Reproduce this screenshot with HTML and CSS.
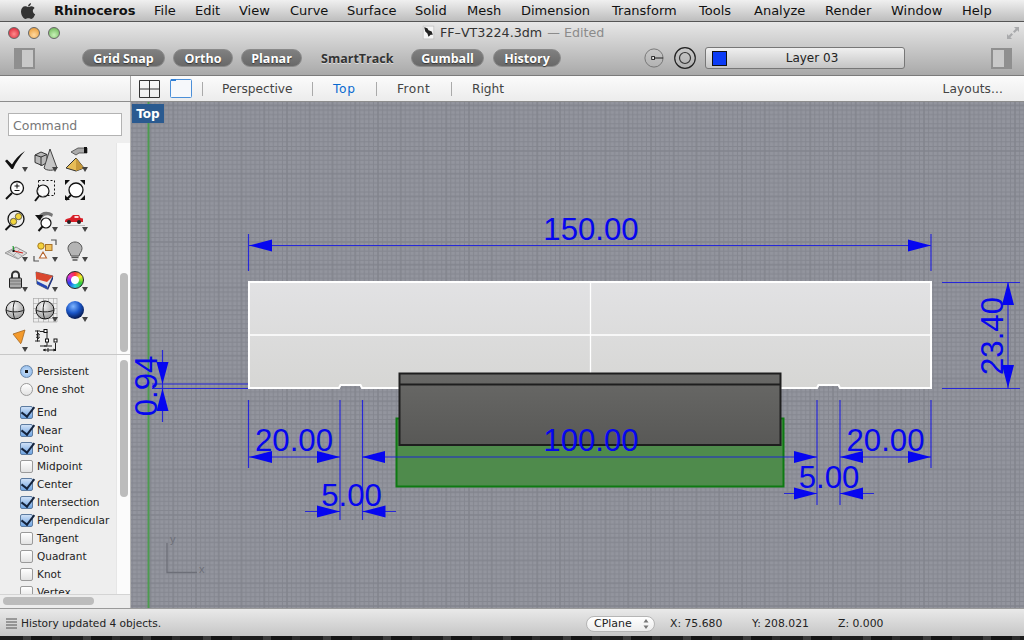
FILE: index.html
```html
<!DOCTYPE html>
<html lang="en">
<head>
<meta charset="utf-8">
<title>FF-VT3224.3dm</title>
<link rel="stylesheet" href="styles.css">
</head>
<body>
<header class="menubar">
  <svg class="apple" viewBox="0 0 16 18"><path d="M11 1c0 2-1.500 3.500-3 3.500C8 3 9.500 1.300 11 1zM8 5c1 0 2-.8 3.400-.8 1.300 0 2.500.7 3.200 1.800-2.600 1.500-2.200 5 .6 6.200-.8 2-2.300 4.800-4 4.800-1 0-1.500-.7-2.800-.7s-1.900.7-2.900.7C3.500 17 1 13 1 9.500 1 6.300 3 4.300 5.100 4.300 6.300 4.300 7.200 5 8 5z"/></svg>
  <span class="menu-app">Rhinoceros</span>
  <span>File</span><span>Edit</span><span>View</span><span>Curve</span><span>Surface</span><span>Solid</span><span>Mesh</span><span>Dimension</span><span>Transform</span><span>Tools</span><span>Analyze</span><span>Render</span><span>Window</span><span>Help</span>
</header>

<div class="window">
  <div class="chrome">
    <div class="titlerow">
      <div class="lights"><i class="light red"></i><i class="light amber"></i><i class="light green"></i></div>
      <div class="title">
        <svg class="doc" viewBox="0 0 12 14"><rect x="1" y="1" width="10" height="12" fill="#f4f4f4" stroke="#bbb" stroke-width=".6"/><path d="M2 2l3 1 1 2 3 1 1 3-2 0-2 2-1-3-2-2z" fill="#222"/></svg>
        <span>FF–VT3224.3dm</span><span class="edited">— Edited</span>
      </div>
      <svg class="fullscreen" viewBox="0 0 14 14"><path d="M13 1H8l1.700 1.700L7 5.400l1.600 1.600 2.700-2.700L13 6zM1 13h5l-1.700-1.700L7 8.600 5.400 7 2.700 9.700 1 8z" fill="#a9aaac"/></svg>
    </div>
    <div class="toolrow">
      <svg class="panel-toggle" viewBox="0 0 21 21"><rect x="1" y="1" width="19" height="19" fill="#c9c9c9" stroke="#8f8f8f" stroke-width="2"/><rect x="1" y="1" width="7" height="19" fill="#8f8f8f"/></svg>
      <div class="pills">
        <span class="pill p1">Grid Snap</span>
        <span class="pill p2">Ortho</span>
        <span class="pill p3">Planar</span>
        <span class="pill-off">SmartTrack</span>
        <span class="pill p4">Gumball</span>
        <span class="pill p5">History</span>
      </div>
      <svg class="tool-a" viewBox="0 0 22 22"><circle cx="11" cy="11" r="10" fill="none" stroke="#6a6a6a" stroke-width=".9"/><rect x="8.500" y="9.500" width="3" height="3" fill="#fff" stroke="#111"/><path d="M11.500 11H21" stroke="#111"/></svg>
      <svg class="tool-b" viewBox="0 0 22 22"><circle cx="11" cy="11" r="10.300" fill="none" stroke="#222" stroke-width="1.200"/><circle cx="11" cy="11" r="5.500" fill="none" stroke="#333" stroke-width="1.200"/></svg>
      <div class="layer"><i class="swatch"></i><span>Layer 03</span></div>
      <svg class="panel-toggle right" viewBox="0 0 21 21"><rect x="1" y="1" width="19" height="19" fill="#c9c9c9" stroke="#8f8f8f" stroke-width="2"/><rect x="13" y="1" width="7" height="19" fill="#8f8f8f"/></svg>
    </div>
  </div>

  <nav class="tabs">
    <div class="tabs-left"></div>
    <svg class="vp-four" viewBox="0 0 21 18"><path d="M.5 .5h20v17H.500zM.5 9h20M10.500 .5v17" fill="none" stroke="#333"/></svg>
    <svg class="vp-one" viewBox="0 0 22 19"><rect x=".5" y=".5" width="21" height="18" rx="1" fill="#f6f8fb" stroke="#4b8fd8"/><path d="M1 1h5" stroke="#2f7fd6" stroke-width="2"/></svg>
    <i class="sep s1"></i>
    <span class="tab t1">Perspective</span><i class="sep s2"></i>
    <span class="tab t2 active">Top</span><i class="sep s3"></i>
    <span class="tab t3">Front</span><i class="sep s4"></i>
    <span class="tab t4">Right</span>
    <span class="tab layouts">Layouts...</span>
  </nav>

  <main class="main">
    <aside class="sidebar">
      <div class="cmd-wrap"><div class="command">Command</div></div>
      <div class="tools-pane">
        <div class="palette">
          <div class="ic dd"><svg viewBox="0 0 30 30"><path d="M5 15l2-1.500 5 5C15 13 19 9 25 5c-5 6-9 11-12 18h-1.500z" fill="#111"/></svg></div>
          <div class="ic dd"><svg viewBox="0 0 30 30"><path d="M5 9l6-3 6 2.500v8l-5 3-7-3z" fill="#b9b9b9" stroke="#333"/><path d="M11 11l6-2.500M11 11l-6-2M11 11v9" stroke="#333" fill="none"/><path d="M20 3l7 19c-2 3-11 3-13 0z" fill="#c6c6c6" stroke="#444"/></svg></div>
          <div class="ic dd"><svg viewBox="0 0 30 30"><path d="M11 6l7-4h9v5H19l-3 2z" fill="#aaa" stroke="#444" stroke-width=".8"/><rect x="24" y="1" width="3" height="6" fill="#111"/><path d="M16 12L6 22l10 3 8-3z" fill="#e7bd57" stroke="#333"/><path d="M16 12v13l8-3z" fill="#c79a3c"/></svg></div>

          <div class="ic"><svg viewBox="0 0 30 30"><circle cx="17" cy="12" r="6.500" fill="#fff" stroke="#111" stroke-width="1.300"/><path d="M12 17l-6 6" stroke="#111" stroke-width="2"/><path d="M14.500 10h5M17 7.500v5M14.500 14.500h5" stroke="#111"/></svg></div>
          <div class="ic"><svg viewBox="0 0 30 30"><rect x="8.500" y="4.500" width="16" height="15" fill="none" stroke="#111" stroke-dasharray="2 2"/><circle cx="13" cy="15" r="6" fill="#fff" fill-opacity=".7" stroke="#111" stroke-width="1.200"/><path d="M9 20l-4 5" stroke="#111" stroke-width="2"/></svg></div>
          <div class="ic"><svg viewBox="0 0 30 30"><circle cx="16" cy="14" r="7" fill="#fff" stroke="#111" stroke-width="1.300"/><path d="M11 19l-5 5" stroke="#111" stroke-width="2"/><path d="M5 4h5L5 9zM25 4h-5l5 5zM5 24h5l-5-5zM25 24h-5l5-5z" fill="#111"/></svg></div>

          <div class="ic"><svg viewBox="0 0 30 30"><circle cx="16" cy="13" r="8" fill="#eee" stroke="#111" stroke-width="1.300"/><circle cx="18.500" cy="10.500" r="3.200" fill="#f2d53c" stroke="#333" stroke-width=".7"/><circle cx="13.500" cy="15.500" r="3.200" fill="#f2d53c" stroke="#333" stroke-width=".7"/><path d="M10.500 19l-5 5" stroke="#111" stroke-width="2"/></svg></div>
          <div class="ic dd"><svg viewBox="0 0 30 30"><circle cx="16" cy="17" r="5" fill="#fff" stroke="#111" stroke-width="1.200"/><path d="M12.500 20.500l-4 4.500" stroke="#111" stroke-width="2"/><path d="M8 11c2-5 9-7 15-3l-1 3c-4-3-8-2-10 1z" fill="#777"/><path d="M5 9l8 0-3 6z" fill="#111"/></svg></div>
          <div class="ic dd"><svg viewBox="0 0 30 30"><path d="M5 15c0-2 2-2.500 5-3l3-3h6l1.500 3 2.500.500V16H5z" fill="#d71f28"/><circle cx="9" cy="16" r="2" fill="#222"/><circle cx="19" cy="16" r="2" fill="#222"/><path d="M14.500 10h4v2h-4z" fill="#ffd9d9"/><path d="M4 19.500h21" stroke="#bbb"/></svg></div>

          <div class="ic dd"><svg viewBox="0 0 30 30"><path d="M5 17l11-6 11 6-9 6z" fill="#ddd" stroke="#999"/><path d="M8 15.500l10 7M12 13l10 7M16 11l-9 7M20 13l-8 8" stroke="#999" stroke-width=".7"/><path d="M14 15l-1-5" stroke="#1a9a2a" stroke-width="1.200"/><path d="M14 15l9 2" stroke="#d0231f" stroke-width="1.200"/><rect x="12.500" y="14" width="2" height="2" fill="#111"/></svg></div>
          <div class="ic dd"><svg viewBox="0 0 30 30"><path d="M4 20v5h5M26 9V4h-5" fill="none" stroke="#555" stroke-width="1.200"/><circle cx="11" cy="10" r="3.200" fill="#f4d23c" stroke="#a67a1e"/><rect x="15.500" y="8.500" width="6.500" height="6" fill="#f0c25a" stroke="#a8702a"/><path d="M13 16l3.500 6h-7z" fill="#fff" stroke="#b5642f" stroke-width="1.100"/></svg></div>
          <div class="ic dd"><svg viewBox="0 0 30 30"><path d="M15 6c4 0 7 3 7 6.500 0 3-2.500 4.500-3 7.500h-8c-.5-3-3-4.500-3-7.500C8 9 11 6 15 6z" fill="#b4b4b4" stroke="#555"/><path d="M11.500 21.500h7M12.500 24h5" stroke="#555" stroke-width="1.500"/></svg></div>

          <div class="ic dd"><svg viewBox="0 0 30 30"><path d="M12 12V9a3.500 3.500 0 017 0v3" fill="none" stroke="#333" stroke-width="2"/><rect x="9.500" y="12" width="12" height="10" rx="1" fill="#aaa" stroke="#222"/><path d="M10 15h11M10 18h11" stroke="#777"/></svg></div>
          <div class="ic dd"><svg viewBox="0 0 30 30"><path d="M6 6l17 4-6 13-10-5z" fill="#e8e8e8" stroke="#333" stroke-width=".7"/><path d="M6 6l17 4-6 6-11-3z" fill="#d9472f"/><path d="M7 18l10 5v-3l-10-5z" fill="#2346b6"/><path d="M17 23l6-13v3l-5 11z" fill="#1b2f80"/></svg></div>
          <div class="ic dd"><i class="wheel"></i></div>

          <div class="ic"><svg viewBox="0 0 30 30"><defs><radialGradient id="gs" cx=".4" cy=".3" r=".8"><stop offset="0" stop-color="#f8f8f8"/><stop offset="1" stop-color="#8e8e8e"/></radialGradient></defs><circle cx="15" cy="14" r="9" fill="url(#gs)" stroke="#111"/><path d="M6 14c4 2.500 14 2.500 18 0M15 5c-2.500 4-2.500 14 0 18" fill="none" stroke="#222"/></svg></div>
          <div class="ic dd"><svg viewBox="0 0 30 30"><path d="M3.500 2v24M8.500 2v24M13.500 2v24M18.500 2v24M23.500 2v24M27 2v24M3 2.500h24M3 7.500h24M3 12.500h24M3 17.500h24M3 22.500h24M3 26h24" stroke="#aaa" stroke-width=".7"/><circle cx="15" cy="14" r="9" fill="url(#gs)" stroke="#111"/><path d="M6 14c4 2.500 14 2.500 18 0M15 5c-2.500 4-2.500 14 0 18" fill="none" stroke="#222"/></svg></div>
          <div class="ic dd"><svg viewBox="0 0 30 30"><defs><radialGradient id="bs" cx=".4" cy=".3" r=".75"><stop offset="0" stop-color="#7fb6ff"/><stop offset=".5" stop-color="#1a56c8"/><stop offset="1" stop-color="#04103c"/></radialGradient></defs><circle cx="15" cy="14" r="9" fill="url(#bs)"/></svg></div>

          <div class="ic dd"><svg viewBox="0 0 30 30"><path d="M13 8l12-4-4 14z" fill="#f39a2c" stroke="#9a5a14" stroke-width=".7"/><path d="M8 22c5 4 14 0 15-5" fill="none" stroke="#eee" stroke-width="3"/></svg></div>
          <div class="ic"><svg viewBox="0 0 30 30"><path d="M7.500 4.500v11M5 5h5M5 15h5M8 7l-1.500 2h3zM8 13l-1.500-2h3zM10 5.500h7v14M17 20h-7M22 20H14" fill="none" stroke="#222"/><rect x="14" y="3.500" width="3" height="3" fill="#fff" stroke="#111"/><rect x="15.500" y="13" width="3" height="3" fill="#fff" stroke="#111"/><rect x="24" y="13" width="3" height="3" fill="#fff" stroke="#111"/><path d="M13 24h13M25.500 17v8M18 22v4" stroke="#222"/><path d="M13 24l2.500-1.500v3zM26 24l-2.500-1.500v3z" fill="#111"/></svg></div>
        </div>
        <div class="vtrack top"><b class="thumb"></b></div>
      </div>

      <div class="snap-pane">
        <div class="snap-list">
          <div class="snap radio-row"><i class="radio on"></i>Persistent</div>
          <div class="snap radio-row last"><i class="radio"></i>One shot</div>
          <div class="snap"><i class="box on"></i>End</div>
          <div class="snap"><i class="box on"></i>Near</div>
          <div class="snap"><i class="box on"></i>Point</div>
          <div class="snap"><i class="box"></i>Midpoint</div>
          <div class="snap"><i class="box on"></i>Center</div>
          <div class="snap"><i class="box on"></i>Intersection</div>
          <div class="snap"><i class="box on"></i>Perpendicular</div>
          <div class="snap"><i class="box"></i>Tangent</div>
          <div class="snap"><i class="box"></i>Quadrant</div>
          <div class="snap"><i class="box"></i>Knot</div>
          <div class="snap"><i class="box"></i>Vertex</div>
        </div>
        <div class="vtrack"><b class="thumb"></b></div>
      </div>
      <div class="htrack"><b class="hthumb"></b></div>
    </aside>

    <section class="viewport">
      <span class="vp-label">Top</span>
      <svg class="canvas" viewBox="131 102 893 506">
        <defs>
          <pattern id="grid" patternUnits="userSpaceOnUse" x="148.500" y="103.500" width="22.750" height="22.750">
            <rect width="22.750" height="22.750" fill="#93959e"/>
            <path d="M2 0v22.750M6.550 0v22.750M11.100 0v22.750M15.650 0v22.750M20.200 0v22.750M0 2h22.750M0 6.550h22.750M0 11.100h22.750M0 15.650h22.750M0 20.200h22.750" stroke="#858790" stroke-width="1"/>
            <path d="M2 0v22.750M0 2h22.750" stroke="#81838c" stroke-width="1.100"/>
          </pattern>
          <linearGradient id="plate" x1="0" y1="0" x2="0" y2="1"><stop offset="0" stop-color="#e2e2e4"/><stop offset="1" stop-color="#d6d6d4"/></linearGradient>
          <linearGradient id="dark" x1="0" y1="0" x2="0" y2="1"><stop offset="0" stop-color="#696967"/><stop offset="1" stop-color="#585856"/></linearGradient>
        </defs>
        <rect x="131" y="102" width="893" height="506" fill="url(#grid)"/>
        <path d="M148.500 102v506" stroke="#4d9a50" stroke-width="2"/>

        <path d="M249 282H931V388H840L838.500 385H818.500L817 388H362L360.500 385H340.500L339 388H249Z" fill="url(#plate)" stroke="#fff" stroke-width="2"/>
        <path d="M250 335H930M590.500 283V387" stroke="#fff" stroke-width="1.300"/>

        <rect x="396.500" y="418.500" width="387" height="68" fill="#4f8b4c" stroke="#0e7a12" stroke-width="2"/>
        <rect x="399.500" y="373.500" width="381" height="71.500" fill="url(#dark)" stroke="#1e1e1e" stroke-width="2"/>
        <path d="M400 384.500H780" stroke="#1e1e1e" stroke-width="2"/>

        <g class="dim-lines">
          <path d="M248.500 234v37M931 234v37M249 245.500H931"/>
          <path d="M248.500 400v68M340 400v120M362.500 400v120M817 400v105M840 400v105M931 400v68"/>
          <path d="M249 457H340M362 457H817M840 457H931"/>
          <path d="M305 511.500H340M362 511.500H396M784 493.500H817M840 493.500H874"/>
          <path d="M942 282.500H1020M942 388.500H1020M1008 282V388"/>
          <path d="M162.500 350V422M152 384H248M152 388.500H248"/>
        </g>
        <g class="dim-arrows">
          <path d="M249 245.500L272 239.500V251.500ZM931 245.500L908 239.500V251.500Z"/>
          <path d="M249 457L272 451V463ZM340 457L317 451V463ZM362 457L385 451V463ZM817 457L794 451V463ZM840 457L863 451V463ZM931 457L908 451V463Z"/>
          <path d="M340 511.500L317 505.500V517.500ZM362.500 511.500L385.500 505.500V517.500ZM817 493.500L794 487.500V499.500ZM840 493.500L863 487.500V499.500Z"/>
          <path d="M1008 282L1002 305H1014ZM1008 388L1002 365H1014Z"/>
          <path d="M162.500 384L156.500 362H168.500ZM162.500 388.500L156.500 411H168.500Z"/>
        </g>
        <g class="dim-text">
          <text x="591" y="240" text-anchor="middle">150.00</text>
          <text x="294" y="451" text-anchor="middle">20.00</text>
          <text x="591" y="451" text-anchor="middle">100.00</text>
          <text x="885.500" y="451" text-anchor="middle">20.00</text>
          <text x="351.500" y="506" text-anchor="middle">5.00</text>
          <text x="829" y="488" text-anchor="middle">5.00</text>
          <text transform="translate(1003 336) rotate(-90)" text-anchor="middle">23.40</text>
          <text transform="translate(157 386) rotate(-90)" text-anchor="middle">0.94</text>
        </g>

        <path d="M167 543V572.500H197" fill="none" stroke="#6d6f78" stroke-width="1.300"/>
        <text class="axis" x="170" y="543">y</text>
        <text class="axis" x="199" y="573">x</text>
      </svg>
    </section>
  </main>

  <footer class="status">
    <svg class="lines" viewBox="0 0 11 11"><path d="M0 1h11M0 4h11M0 7h11M0 10h11" stroke="#555"/></svg>
    <span class="status-msg">History updated 4 objects.</span>
    <span class="cplane">CPlane<svg viewBox="0 0 6 10"><path d="M3 0l2.500 3.500h-5zM3 10L.5 6.500h5z" fill="#777"/></svg></span>
    <span class="coord cx">X: 75.680</span>
    <span class="coord cy">Y: 208.021</span>
    <span class="coord cz">Z: 0.000</span>
  </footer>
</div>
<div class="desktop"></div>
</body>
</html>
```

FILE: styles.css
```css
* { box-sizing: border-box; }
html, body { margin: 0; height: 640px; overflow: hidden; }
body { background: #161616; font-family: "DejaVu Sans", sans-serif; color: #222; width: 1024px; }

.menubar {
  height: 22px;
  display: grid;
  grid-template-columns: 54px 100px 41px 44px 51px 57px 68px 52px 54px 91px 87px 55px 71px 66px 71px 1fr;
  align-items: center;
  background: linear-gradient(#f0f0f0, #bdbdbd);
  font-size: 13px;
  color: #111;
  border-bottom: 1px solid #555;
}
.apple { width: 16px; height: 18px; margin-left: 20px; fill: #333; }
.menu-app { font-weight: 700; }

.window {
  height: 614px;
  display: flex;
  flex-direction: column;
  background: #eee;
  border-radius: 4px 4px 0 0;
}
.chrome {
  height: 54px;
  background: linear-gradient(#e7e7e7, #a9a9a9);
  border-bottom: 1px solid #7b7b7b;
  flex: none;
}
.titlerow { height: 21px; display: flex; align-items: center; position: relative; padding-left: 8px; }
.lights { display: flex; gap: 8px; }
.light { width: 12px; height: 12px; border-radius: 50%; border: 1px solid #666; }
.red { background: radial-gradient(circle at 50% 60%, #ff8c8c, #d5142a); }
.amber { background: radial-gradient(circle at 50% 70%, #ffd9a0, #e6932a); }
.green { background: radial-gradient(circle at 50% 70%, #c9f2b8, #62b04e); }
.title { position: absolute; left: 422px; top: 3px; display: flex; align-items: center; gap: 5px; font-size: 12.700px; color: #333; white-space: nowrap; }
.doc { width: 13px; height: 15px; }
.edited { color: #8b8b8b; }
.fullscreen { position: absolute; right: 4px; top: 4px; width: 14px; height: 14px; }

.toolrow { height: 30px; display: flex; align-items: center; position: relative; padding-left: 14px; }
.panel-toggle { width: 21px; height: 21px; flex: none; }
.panel-toggle.right { margin-left: 86px; }
.pills { display: flex; align-items: center; margin-left: 47px; width: 479px; font-family: "Open Sans", sans-serif; font-weight: 700; font-size: 12.500px; }
.pill {
  height: 18px;
  border-radius: 9px;
  border: 1px solid #8a8a8a;
  background: linear-gradient(#808080, #686868);
  color: #fff;
  display: flex; align-items: center; justify-content: center;
  text-shadow: 0 1px 1px #333;
  margin-right: 8px;
  flex: none;
}
.p1 { width: 83px; } .p2 { width: 60px; } .p3 { width: 61px; }
.p4 { width: 73px; margin-right: 9px; } .p5 { width: 68px; margin-right: 0; }
.pill-off { width: 70px; margin: 0 20px 0 11px; color: #333; text-shadow: 0 1px 0 #ddd; white-space: nowrap; flex: none; }
.tool-a { width: 20px; height: 20px; margin-left: 83px; flex: none; }
.tool-b { width: 22px; height: 22px; margin-left: 10px; flex: none; }
.layer {
  width: 200px; height: 22px; margin-left: 9px; flex: none;
  border: 1px solid #777; border-radius: 3px;
  background: linear-gradient(#f0f0f0, #c4c4c4);
  display: flex; align-items: center; position: relative; font-size: 12px;
  justify-content: center;
}
.layer span { padding-left: 14px; }
.swatch { position: absolute; left: 6px; top: 3px; width: 15px; height: 15px; background: #0b3bf5; border: 1px solid #111; }

.tabs {
  height: 26px; flex: none;
  display: flex; align-items: center;
  background: linear-gradient(#fbfbfb, #ececec);
  border-bottom: 1px solid #8d8d8d;
  font-size: 12.200px;
  color: #444;
  position: relative;
}
.tabs-left { width: 131px; height: 25px; border-right: 1px solid #a8a8a8; flex: none; }
.vp-four { width: 21px; height: 18px; margin-left: 8px; flex: none; }
.vp-one { width: 22px; height: 19px; margin-left: 10px; flex: none; }
.sep { width: 1px; height: 14px; background: #aaa; flex: none; }
.s1 { margin-left: 10px; } .s2 { margin-left: 20px; } .s3 { margin-left: 20px; } .s4 { margin-left: 20px; }
.tab { flex: none; margin-left: 20px; padding-top: 1px; }
.t1 { width: 70px; margin-left: 19px; white-space: nowrap; }
.t2 { width: 23px; letter-spacing: .7px; } .t3 { width: 34px; letter-spacing: .5px; } .t4 { width: 32px; }
.active { color: #0a6ad0; }
.layouts { margin-left: auto; margin-right: 21px; letter-spacing: .1px; }

.main { flex: 1; display: flex; min-height: 0; }
.sidebar { width: 131px; flex: none; background: #eeeeee; border-right: 1px solid #b4b4b4; display: flex; flex-direction: column; }
.cmd-wrap { height: 41px; padding: 11px 8px 7px; flex: none; }
.command { height: 23px; width: 114px; border: 1px solid #b3b3b3; background: #fff; font-size: 12.500px; color: #777; padding: 4px 0 0 4px; }

.tools-pane { height: 212px; flex: none; display: flex; border-bottom: 1px solid #c8c8c8; }
.palette { width: 116px; display: grid; grid-template-columns: repeat(3, 30px); grid-auto-rows: 30px; padding-top: 3px; align-content: start; }
.ic { position: relative; width: 30px; height: 30px; }
.ic svg { width: 30px; height: 30px; display: block; }
.dd::after {
  content: ""; position: absolute; left: 22px; top: 21px;
  border: 3px solid transparent; border-top: 5px solid #444; border-bottom: 0;
}
.wheel {
  position: absolute; left: 6px; top: 5px; width: 18px; height: 18px; border-radius: 50%;
  background: radial-gradient(circle, #fff 0 3.500px, transparent 4.500px), conic-gradient(#f33, #f3f32a, #2ecc40, #28d0e0, #2a40f0, #e030d0, #f33);
  border: 1px solid #222;
}
.vtrack { width: 14px; background: #fbfbfb; position: relative; flex: none; border-left: 1px solid #e6e6e6; }
.vtrack.top .thumb { top: 130px; height: 79px; }
.thumb { position: absolute; left: 3px; width: 8px; border-radius: 4px; background: #bcbcbc; top: 5px; height: 137px; }

.snap-pane { flex: 1; min-height: 0; display: flex; }
.snap-list { width: 116px; overflow: hidden; padding: 7px 0 0 20px; }
.snap { height: 18px; display: flex; align-items: center; gap: 4px; font-size: 10.500px; color: #222; white-space: nowrap; }
.last { margin-bottom: 5px; }
.radio, .box { width: 13px; height: 13px; flex: none; background: linear-gradient(#fff, #e2e2e2); border: 1px solid #9a9a9a; position: relative; }
.radio { border-radius: 50%; }
.radio.on { background: radial-gradient(circle, #111 0 1.500px, #bcd6f4 2px, #7fb0e6); border-color: #6a86a8; }
.box { border-radius: 2px; }
.box.on { background: linear-gradient(#cfe1f7, #6fa4e2); border-color: #5c7ba0; }
.box.on::after {
  content: ""; position: absolute; left: 3px; top: -3px; width: 6px; height: 11px;
  border: solid #14233c; border-width: 0 2px 2px 0; transform: rotate(38deg);
}
.htrack { height: 14px; flex: none; background: #ededed; border-top: 1px solid #d4d4d4; position: relative; }
.hthumb { position: absolute; left: 3px; top: 2px; width: 91px; height: 8px; border-radius: 4px; background: #bcbcbc; }

.viewport { flex: 1; position: relative; min-width: 0; }
.canvas { display: block; width: 893px; height: 506px; }
.vp-label {
  position: absolute; left: 1px; top: 2px; width: 32px; height: 19px;
  background: #2a5a90; color: #fff; font: 700 12px "DejaVu Sans", sans-serif;
  display: flex; align-items: center; justify-content: center;
}
.dim-lines path { fill: none; stroke: #1c1ce0; stroke-opacity: .9; stroke-width: 1.200; }
.dim-arrows path { fill: #0606f0; }
.dim-text text { font: 31.200px "Liberation Sans", sans-serif; fill: #0606ee; }
.axis { font: 11px "Liberation Sans", sans-serif; fill: #6d6f78; }

.status {
  height: 28px; flex: none; position: relative;
  background: linear-gradient(#e9e9e9, #c6c6c6);
  border-top: 1px solid #9a9a9a;
  display: flex; align-items: center;
  font-size: 10.800px; color: #222;
  padding: 2px 0 0 6px;
}
.lines { width: 11px; height: 11px; flex: none; }
.status-msg { margin: 0 0 2px 4px; width: 565px; flex: none; white-space: nowrap; font-size: 10.600px; }
.cplane {
  width: 69px; height: 16px; flex: none; border: 1px solid #b5b5b5; border-radius: 8px;
  background: linear-gradient(#fff, #ececec);
  display: flex; align-items: center; justify-content: space-between; padding: 0 5px 0 7px; font-size: 11px;
}
.cplane svg { width: 6px; height: 10px; }
.coord { flex: none; white-space: nowrap; }
.cx { margin-left: 15px; width: 82px; } .cy { width: 86px; }

.desktop { height: 4px; background: repeating-linear-gradient(90deg, #1c1c1c 0 23px, #3a3a3a 23px 31px, #141414 31px 52px, #2c2c2c 52px 60px); }
```
